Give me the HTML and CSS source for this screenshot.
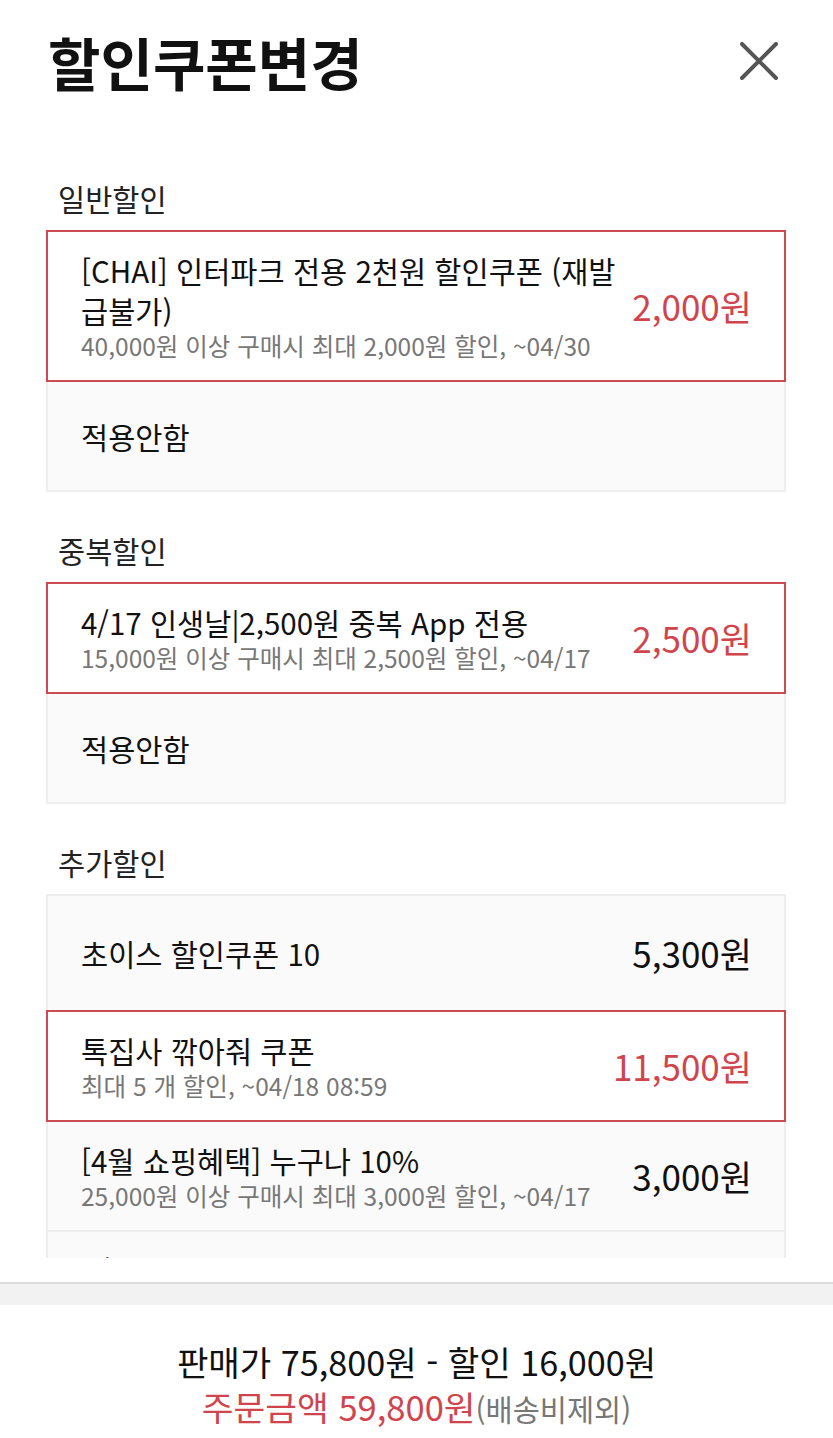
FILE: index.html
```html
<!DOCTYPE html>
<html lang="ko">
<head>
    <meta charset="UTF-8">
    <meta name="viewport" content="width=device-width, initial-scale=1.0">
    <title>할인쿠폰변경</title>
    <link rel="stylesheet" href="styles.css">
</head>
<body>
    <div class="scroll">
        <div class="header">
            <h1>할인쿠폰변경</h1>
            <svg class="close" width="38" height="38" viewBox="0 0 38 38">
                <path d="M2 2 L36 36 M36 2 L2 36" stroke="#555" stroke-width="4" stroke-linecap="round" fill="none"/>
            </svg>
        </div>

        <div class="section first">
            <div class="label">일반할인</div>
            <div class="list">
                <div class="item selected">
                    <div class="info">
                        <div class="name">[CHAI] 인터파크 전용 2천원 할인쿠폰 (재발급불가)</div>
                        <div class="desc">40,000원 이상 구매시 최대 2,000원 할인, ~04/30</div>
                    </div>
                    <div class="price">2,000원</div>
                </div>
                <div class="item">
                    <div class="info">
                        <div class="name">적용안함</div>
                    </div>
                </div>
            </div>
        </div>

        <div class="section">
            <div class="label">중복할인</div>
            <div class="list">
                <div class="item selected">
                    <div class="info">
                        <div class="name">4/17 인생날|2,500원 중복 App 전용</div>
                        <div class="desc">15,000원 이상 구매시 최대 2,500원 할인, ~04/17</div>
                    </div>
                    <div class="price">2,500원</div>
                </div>
                <div class="item">
                    <div class="info">
                        <div class="name">적용안함</div>
                    </div>
                </div>
            </div>
        </div>

        <div class="section">
            <div class="label">추가할인</div>
            <div class="list extra">
                <div class="item">
                    <div class="info">
                        <div class="name">초이스 할인쿠폰 10</div>
                    </div>
                    <div class="price">5,300원</div>
                </div>
                <div class="item selected">
                    <div class="info">
                        <div class="name">톡집사 깎아줘 쿠폰</div>
                        <div class="desc">최대 5 개 할인, ~04/18 08:59</div>
                    </div>
                    <div class="price">11,500원</div>
                </div>
                <div class="item">
                    <div class="info">
                        <div class="name">[4월 쇼핑혜택] 누구나 10%</div>
                        <div class="desc">25,000원 이상 구매시 최대 3,000원 할인, ~04/17</div>
                    </div>
                    <div class="price">3,000원</div>
                </div>
                <div class="item">
                    <div class="info">
                        <div class="name">4/17 인생날|2,500원 추가 App 전용</div>
                        <div class="desc">15,000원 이상 구매시 최대 2,500원 할인, ~04/17</div>
                    </div>
                    <div class="price">2,500원</div>
                </div>
            </div>
        </div>
    </div>

    <div class="footer">
        <div class="band"></div>
        <div class="summary">
            <p>판매가 75,800원 - 할인 16,000원</p>
            <p><span class="total">주문금액 59,800원</span><span class="note">(배송비제외)</span></p>
        </div>
    </div>
</body>
</html>
```

FILE: styles.css
```css
body {
    font-family: "Noto Sans CJK KR", "Noto Sans", sans-serif;
    margin: 0;
    background: white;
    color: #111;
}
.scroll {
    height: 1258px;
    overflow: hidden;
    margin-bottom: 24px;
}
.header {
    display: flex;
    justify-content: space-between;
    align-items: center;
    padding: 26px 55px 0 48px;
}
.header h1 {
    margin: 0;
    font-size: 57px;
    font-weight: bold;
    line-height: 70px;
}
.section {
    padding: 0 47px 0 46px;
    margin-top: 38px;
}
.section.first {
    margin-top: 82px;
}
.label {
    font-size: 29.5px;
    line-height: 40px;
    color: #222;
    padding-left: 12px;
    margin-bottom: 12px;
}
.item {
    display: flex;
    align-items: center;
    gap: 12px;
    min-height: 112px;
    box-sizing: border-box;
    padding: 18px 32px 18px 33px;
    border: 2px solid #eee;
    background: #fafafa;
    position: relative;
}
.item + .item {
    margin-top: -2px;
}
.extra .item {
    min-height: 110px;
}
.extra .item:first-child {
    min-height: 118px;
}
.item.selected {
    border-color: #cc4b52;
    background: white;
    z-index: 1;
}
.info {
    flex: 1;
    max-width: 540px;
}
.name {
    font-size: 29.5px;
    line-height: 40px;
    color: #111;
}
.desc {
    font-size: 24.5px;
    line-height: 32px;
    color: #777;
}
.price {
    margin-left: auto;
    flex-shrink: 0;
    font-size: 35px;
    line-height: 40px;
    color: #111;
}
.selected .price {
    color: #d0454d;
}
.footer {
    border-top: 2px solid #dcdcdc;
}
.band {
    height: 21px;
    background: #f2f2f2;
}
.summary {
    padding-top: 34px;
    text-align: center;
}
.summary p {
    margin: 0;
    font-size: 34.2px;
    line-height: 45px;
    color: #111;
}
.total {
    font-size: 34.5px;
    color: #d0454d;
}
.note {
    font-size: 29.5px;
    color: #777;
}
```
